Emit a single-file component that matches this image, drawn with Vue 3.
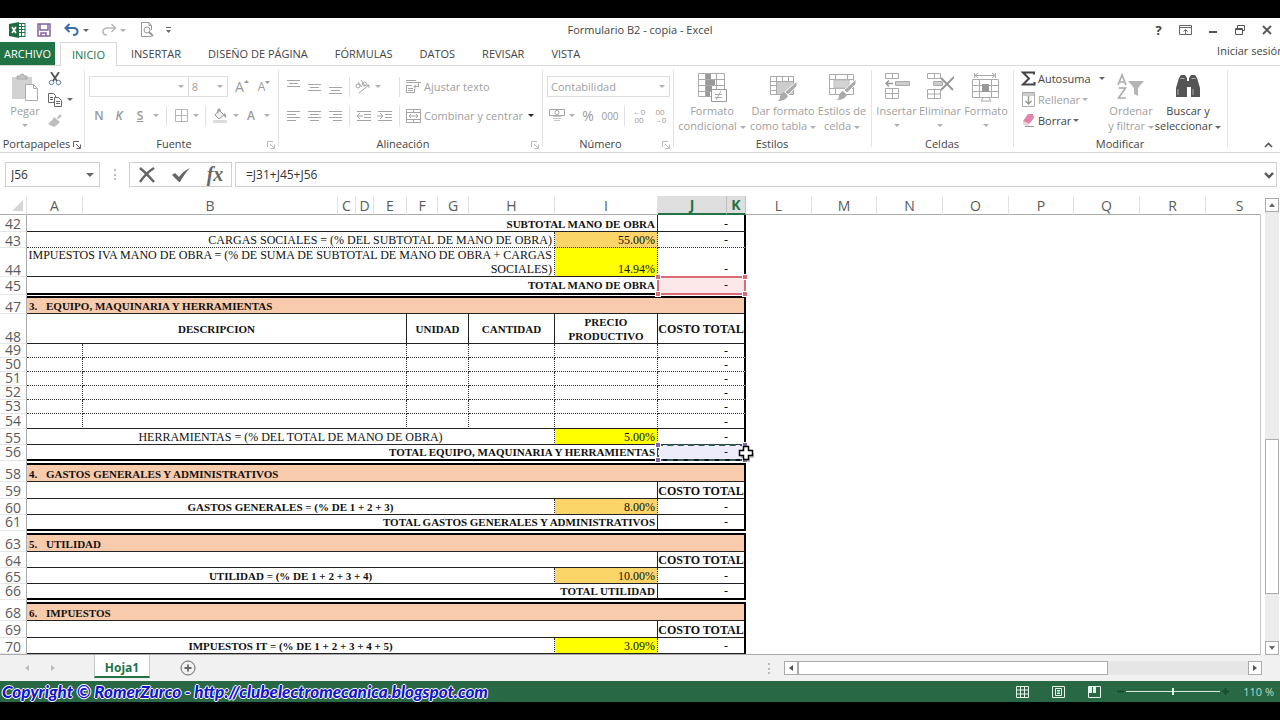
<script setup>
import { h, ref } from 'vue'

const Launcher = () =>
  h('svg', { width: 8, height: 8, viewBox: '0 0 8 8', fill: 'none', stroke: 'currentColor' }, [
    h('path', { d: 'M.5 6V.5H6M3 3l4 4M7.500 3.500V7.500H3.500' })
  ])

const tabs = ['INSERTAR', 'DISEÑO DE PÁGINA', 'FÓRMULAS', 'DATOS', 'REVISAR', 'VISTA']
const nameBox = ref('J56')
const formula = ref('=J31+J45+J56')
const zoom = ref(50)

const columns = [
  ['A', 56], ['B', 255], ['C', 18], ['D', 18], ['E', 33], ['F', 31], ['G', 31], ['H', 86],
  ['I', 103], ['J', 69], ['K', 19], ['L', 66], ['M', 65], ['N', 66], ['O', 66], ['P', 65],
  ['Q', 66], ['R', 66], ['S', 0]
]

const total = (text, cls = '') => [
  { text, span: 9, cls: 'right bold solid-r' },
  { text: text && '-', span: 2, cls: 'amount ' + cls }
]
const rate = (text, value, fill, align = 'right', side = 'dot-r') => [
  { text, span: 8, cls: align + ' dot-r' },
  { text: value, span: 1, cls: 'right low ' + fill + ' ' + side },
  { text: '-', span: 2, cls: 'amount' }
]
const section = (num, text) => [{ num, text, span: 11, cls: 'section bold' }]
const costHead = () => [
  { text: '', span: 9, cls: 'solid-r' },
  { text: 'COSTO TOTAL', span: 2, cls: 'center cost' }
]
const item = () => [
  { text: '', span: 1, cls: 'dot-r' },
  { text: '', span: 4, cls: 'dot-r' },
  { text: '', span: 2, cls: 'dot-r' },
  { text: '', span: 1, cls: 'dot-r' },
  { text: '', span: 1, cls: 'dot-r' },
  { text: '-', span: 2, cls: 'amount' }
]

const rows = [
  { n: 42, size: 'h17', cells: total('SUBTOTAL MANO DE OBRA') },
  { n: 43, size: 'h16', line: 'dotted', cells: rate('CARGAS SOCIALES = (% DEL SUBTOTAL DE MANO DE OBRA)', '55.00%', 'orange') },
  { n: 44, size: 'h29', cells: rate('IMPUESTOS IVA MANO DE OBRA = (% DE SUMA DE SUBTOTAL DE MANO DE OBRA + CARGAS\nSOCIALES)', '14.94%', 'yellow') },
  { n: 45, size: 'h18', line: 'thick', cells: total('TOTAL MANO DE OBRA', 'range-red') },
  { n: '', size: 'h1', line: 'none', cells: [{ text: '', span: 11, cls: 'gap' }] },
  { n: 47, size: 'h18', cells: section('3.', 'EQUIPO, MAQUINARIA Y HERRAMIENTAS') },
  {
    n: 48, size: 'h30', cells: [
      { text: 'DESCRIPCION', span: 5, cls: 'center bold solid-r' },
      { text: 'UNIDAD', span: 2, cls: 'center bold solid-r' },
      { text: 'CANTIDAD', span: 1, cls: 'center bold solid-r' },
      { text: 'PRECIO\nPRODUCTIVO', span: 1, cls: 'center bold solid-r' },
      { text: 'COSTO TOTAL', span: 2, cls: 'center cost' }
    ]
  },
  { n: 49, size: 'h14', line: 'dotted', cells: item() },
  { n: 50, size: 'h14', line: 'dotted', cells: item() },
  { n: 51, size: 'h14', line: 'dotted', cells: item() },
  { n: 52, size: 'h14', line: 'dotted', cells: item() },
  { n: 53, size: 'h14', line: 'dotted', cells: item() },
  { n: 54, size: 'h15', cells: item() },
  { n: 55, size: 'h16', cells: rate('HERRAMIENTAS = (% DEL TOTAL DE MANO DE OBRA)', '5.00%', 'yellow', 'center') },
  { n: 56, size: 'h16', line: 'thick', cells: total('TOTAL EQUIPO, MAQUINARIA Y HERRAMIENTAS', 'range-dash') },
  { n: '', size: 'h2', line: 'none', cells: [{ text: '', span: 11, cls: 'gap' }] },
  { n: 58, size: 'h19', cells: section('4.', 'GASTOS GENERALES Y ADMINISTRATIVOS') },
  { n: 59, size: 'h17', cells: costHead() },
  { n: 60, size: 'h16', cells: rate('GASTOS GENERALES = (% DE 1 + 2 + 3)', '8.00%', 'orange', 'center bold') },
  { n: 61, size: 'h16', line: 'thick', cells: total('TOTAL GASTOS GENERALES Y ADMINISTRATIVOS') },
  { n: '', size: 'h2', line: 'none', cells: [{ text: '', span: 11, cls: 'gap' }] },
  { n: 63, size: 'h19', cells: section('5.', 'UTILIDAD') },
  { n: 64, size: 'h16', cells: costHead() },
  { n: 65, size: 'h16', cells: rate('UTILIDAD = (% DE 1 + 2 + 3 + 4)', '10.00%', 'orange', 'center bold') },
  { n: 66, size: 'h16', line: 'thick', cells: total('TOTAL UTILIDAD') },
  { n: '', size: 'h2', line: 'none', cells: [{ text: '', span: 11, cls: 'gap' }] },
  { n: 68, size: 'h19', cells: section('6.', 'IMPUESTOS') },
  { n: 69, size: 'h17', cells: costHead() },
  { n: 70, size: 'h16', cells: rate('IMPUESTOS IT = (% DE 1 + 2 + 3 + 4 + 5)', '3.09%', 'yellow', 'center bold') },
  { n: 71, size: 'h16', cells: total('') }
]
</script>

<template>
  <div class="screen">
    <div class="excel">
      <header class="titlebar">
        <div class="quick">
          <svg class="logo" width="17" height="16" viewBox="0 0 17 16">
            <rect x="9" y="1.500" width="7" height="13" fill="#fff" stroke="#217346" />
            <path d="M10 4.500h6M10 7.500h6M10 10.500h6M12.500 2v12" stroke="#217346" />
            <path d="M0 2l10-2v16L0 14z" fill="#1e6b41" />
            <path d="M3 5l4 6M7 5l-4 6" stroke="#fff" stroke-width="1.600" />
          </svg>
          <button class="save" aria-label="Guardar">
            <svg width="14" height="14" viewBox="0 0 14 14" fill="none" stroke="#80659f" stroke-width="1.500">
              <path d="M1 1h12v12H1zM3 1v6h8V1M4 13V10h5v3" />
            </svg>
          </button>
          <button class="undo" aria-label="Deshacer">
            <svg width="16" height="14" viewBox="0 0 16 14" fill="none" stroke="#3b6ea8" stroke-width="2">
              <path d="M5.500 1L1.500 5l4 4M2 5h7.500c3 0 4 1.500 4 3.500S12 12 9 12" />
            </svg>
          </button>
          <span class="caret dark"></span>
          <button class="redo" aria-label="Rehacer">
            <svg width="16" height="14" viewBox="0 0 16 14" fill="none" stroke="#b9b9b9" stroke-width="1.600">
              <path d="M10.500 1l4 4-4 4M14 5H6.500C3.500 5 2 6.500 2 8.500S3.500 12 6 12" />
            </svg>
          </button>
          <span class="caret"></span>
          <button class="preview" aria-label="Vista previa">
            <svg width="14" height="16" viewBox="0 0 14 16" fill="none" stroke="#999">
              <path d="M11.500 14.500h-10V.5H9l2.500 3V8M9 .5v3h2.500" /><circle cx="7" cy="8" r="3" /><path d="M9 10l4 4" stroke-width="2" />
            </svg>
          </button>
          <svg class="more" width="7" height="7" viewBox="0 0 7 7"><path d="M1 .5h5" stroke="#666" /><path d="M1 3h5L3.500 6z" fill="#666" /></svg>
        </div>
        <h1>Formulario B2 - copia - Excel</h1>
        <div class="window-buttons">
          <button class="help" aria-label="Ayuda">?</button>
          <button aria-label="Opciones de presentación"><svg width="13" height="10" viewBox="0 0 13 10" fill="none" stroke="#666"><path d="M.5.500h12v9H.5zM.5 2.500h12M6.500 9V4.500M4.500 6.500l2-2 2 2" /></svg></button>
          <button aria-label="Minimizar"><svg width="10" height="10" viewBox="0 0 10 10"><path d="M1 7h8" stroke="#555" stroke-width="2" /></svg></button>
          <button aria-label="Restaurar"><svg width="10" height="10" viewBox="0 0 10 10" fill="none" stroke="#555"><path d="M2.500 3V.5h7v5H7.500M.5 3.500h7v6h-7zM.5 4.500h7" /></svg></button>
          <button aria-label="Cerrar"><svg width="10" height="10" viewBox="0 0 10 10"><path d="M1 1l8 8M9 1L1 9" stroke="#555" stroke-width="1.800" /></svg></button>
        </div>
      </header>

      <nav class="tabs">
        <button class="file">ARCHIVO</button>
        <button class="active">INICIO</button>
        <button v-for="t in tabs" :key="t">{{ t }}</button>
        <a href="#" class="signin">Iniciar sesión</a>
      </nav>

      <section class="ribbon">
        <div class="group g-clip">
          <div class="body">
            <button class="big off">
              <svg width="28" height="29" viewBox="0 0 28 29">
                <path d="M1 4h20v22H1z" fill="#d2d2d2" /><path d="M6 6V3h3q0-2 2-2t2 2h3v3z" fill="#c2c2c2" stroke="#aaa" />
                <path d="M14.500 11.500h8l4 4v12h-12z" fill="#fff" stroke="#aaa" /><path d="M22.500 11.500v4h4" fill="none" stroke="#aaa" />
              </svg>
              <span>Pegar</span><span class="caret"></span>
            </button>
            <div class="stack">
              <button aria-label="Cortar"><svg width="14" height="14" viewBox="0 0 14 14" fill="none"><path d="M3 0l6 9M11 0L5 9" stroke="#555" stroke-width="1.800" /><circle cx="3.500" cy="10.500" r="2.200" stroke="#5b7fa8" /><circle cx="10.500" cy="10.500" r="2.200" stroke="#5b7fa8" /></svg></button>
              <button aria-label="Copiar"><svg width="14" height="14" viewBox="0 0 14 14" fill="#fff" stroke="#666"><path d="M.5.500h5l2 2v7h-7zM2 4.500h3M2 6.500h3" /><path d="M6.500 4.500h4l3 3v6h-7zM8 8.500h4M8 10.500h4" /></svg><span class="caret dark"></span></button>
              <button aria-label="Copiar formato"><svg width="14" height="14" viewBox="0 0 14 14" fill="#bdbdbd"><path d="M9 4l3-4 2 2-4 3zM6 3l6 5-2 2-5-5zM5 5l5 5-4 3-6-3z" /></svg></button>
            </div>
          </div>
          <footer><span>Portapapeles</span><Launcher class="launch dark-ink" /></footer>
        </div>

        <div class="group g-font">
          <div class="body lines">
            <div class="line">
              <span class="pick fontname"><select aria-label="Fuente"><option></option></select><span class="caret"></span></span>
              <span class="pick fontsize"><select aria-label="Tamaño de fuente"><option>8</option></select><span class="caret"></span></span>
              <button class="w22 glyph-a" aria-label="Aumentar fuente">A<svg width="5" height="4" viewBox="0 0 5 4"><path d="M0 3l2.500-3L5 3z" fill="#999" /></svg></button>
              <button class="w22 glyph-a small" aria-label="Disminuir fuente">A<svg width="5" height="4" viewBox="0 0 5 4"><path d="M0 0h5L2.500 3z" fill="#999" /></svg></button>
            </div>
            <div class="line">
              <button class="w20 strong">N</button><button class="w20 strong italic">K</button><button class="w22 strong under">S</button><span class="caret w10"></span>
              <i class="sep w10"></i>
              <button class="w20" aria-label="Bordes"><svg width="13" height="13" viewBox="0 0 13 13" fill="none" stroke="#b5b5b5"><path d="M.5.500h12v12H.5zM6.500 0v13M0 6.500h13" /></svg></button><span class="caret w10"></span>
              <i class="sep w8"></i>
              <button class="w22" aria-label="Color de relleno"><svg width="15" height="15" viewBox="0 0 15 15"><path d="M6 2l5 5-5 4-4-4zM5 5V1h2v3" fill="#eee" stroke="#999" /><path d="M11 5q3 2 2 5l-2-2z" fill="#999" /><path d="M0 12h14v3H0z" fill="#dcdcdc" /></svg></button><span class="caret w10"></span>
              <button class="w20 strong">A</button><span class="caret w12"></span>
            </div>
          </div>
          <footer><span>Fuente</span><Launcher class="launch" /></footer>
        </div>

        <div class="group g-align">
          <div class="body lines">
            <div class="line">
              <button class="w21" aria-label="Alinear arriba"><svg width="13" height="16" viewBox="0 0 13 16" stroke="#a5a5a5"><path d="M0 1.500h13M2 4.500h9M0 7.500h13" /></svg></button>
              <button class="w21" aria-label="Alinear al medio"><svg width="13" height="16" viewBox="0 0 13 16" stroke="#a5a5a5"><path d="M0 5.500h13M2 8.500h9M0 11.500h13" /></svg></button>
              <button class="w21" aria-label="Alinear abajo"><svg width="13" height="16" viewBox="0 0 13 16" stroke="#a5a5a5"><path d="M0 8.500h13M2 11.500h9M0 14.500h13" /></svg></button>
              <i class="sep w7"></i>
              <button class="w20" aria-label="Orientación"><svg width="16" height="14" viewBox="0 0 16 14" fill="none" stroke="#a5a5a5"><circle cx="3" cy="6" r="2" /><path d="M3 2l4 5M6 0l4 6" /><circle cx="9.500" cy="4" r="2" /><path d="M4 13L14 5M14 5v3M14 5h-3" /></svg></button><span class="caret w10"></span>
              <i class="w12"></i><i class="sep w8"></i>
              <button class="label off"><svg width="15" height="15" viewBox="0 0 15 15" fill="none" stroke="#a5a5a5"><path d="M0 1.500h10M0 3.500h15M12.500 4v4M0 6.500h6M8 7.500h4M10 5.500l-2 2 2 2M.5 6.500v7h8v-4M2 9.500h5M2 11.500h5" /></svg>Ajustar texto</button>
            </div>
            <div class="line">
              <button class="w21" aria-label="Izquierda"><svg width="13" height="12" viewBox="0 0 13 12" stroke="#a5a5a5"><path d="M0 1.500h13M0 4.500h9M0 7.500h13M0 10.500h9" /></svg></button>
              <button class="w21" aria-label="Centrar"><svg width="13" height="12" viewBox="0 0 13 12" stroke="#a5a5a5"><path d="M0 1.500h13M2 4.500h9M0 7.500h13M2 10.500h9" /></svg></button>
              <button class="w21" aria-label="Derecha"><svg width="13" height="12" viewBox="0 0 13 12" stroke="#a5a5a5"><path d="M0 1.500h13M4 4.500h9M0 7.500h13M4 10.500h9" /></svg></button>
              <i class="sep w7"></i>
              <button class="w21" aria-label="Disminuir sangría"><svg width="15" height="12" viewBox="0 0 15 12" fill="none" stroke="#a5a5a5"><path d="M1 1.500h14M8 4.500h7M8 7.500h7M1 10.500h14M7 6H1M4 3L1 6l3 3" /></svg></button>
              <button class="w21" aria-label="Aumentar sangría"><svg width="15" height="12" viewBox="0 0 15 12" fill="none" stroke="#a5a5a5"><path d="M1 1.500h14M8 4.500h7M8 7.500h7M1 10.500h14M0 6h6M3 3l3 3-3 3" /></svg></button>
              <i class="sep w8"></i>
              <button class="label off"><svg width="15" height="14" viewBox="0 0 15 14" fill="none" stroke="#a5a5a5"><path d="M.5.500h14v13H.5zM0 3.500h15M0 10.500h15M7.500 0v3.500M7.500 10.500V14M3 7h9M5 5L3 7l2 2M10 5l2 2-2 2" /></svg>Combinar y centrar</button>
              <span class="caret ink w16"></span>
            </div>
          </div>
          <footer><span>Alineación</span><Launcher class="launch" /></footer>
        </div>

        <div class="group g-num">
          <div class="body lines">
            <div class="line"><span class="pick format"><select aria-label="Formato de número"><option>Contabilidad</option></select><span class="caret"></span></span></div>
            <div class="line">
              <button class="w20" aria-label="Formato de contabilidad"><svg width="16" height="15" viewBox="0 0 16 15" fill="none" stroke="#a5a5a5"><path d="M.5 1.500h15v6H.5z" /><circle cx="8" cy="4.500" r="2" /><path d="M4 10.500h8M5 12.500h6M4 8.500h8" stroke="#c8c8c8" /></svg></button><span class="caret w10"></span>
              <button class="w22 pct">%</button><button class="w22 thousands">000</button>
              <i class="sep w7"></i>
              <button class="w22 dec" aria-label="Aumentar decimales"><span>←0</span><span>00</span></button>
              <button class="w20 dec" aria-label="Disminuir decimales"><span>00</span><span>→0</span></button>
            </div>
          </div>
          <footer><span>Número</span><Launcher class="launch" /></footer>
        </div>

        <div class="group g-style">
          <div class="body">
            <button class="big off w72">
              <svg width="29" height="29" viewBox="0 0 29 29" fill="none" stroke="#aaa"><path d="M.5.500h26v23H.5zM0 6.500h27M0 12.500h27M0 18.500h27M7.500 0v24M18.500 0v24" /><path d="M8 1h5v5H8zM8 7h9v5H8zM8 13h6v5H8zM8 19h4v4H8z" fill="#999" stroke="none" /><path d="M13.500 16.500h15v12h-15z" fill="#fff" stroke="#999" /><path d="M17 21.500h7M17 24.500h7M23 18l-5 9" /></svg>
              <span>Formato</span><span>condicional <i class="caret"></i></span>
            </button>
            <button class="big off w70">
              <svg width="29" height="29" viewBox="0 0 29 29" fill="none" stroke="#aaa"><path d="M1.500 3.500h23v18h-23zM1 8.500h24M1 12.500h24M1 17.500h24M7.500 3v19M13.500 3v19M19.500 3v19" /><path d="M8 9h16v12H8z" fill="#ccc" stroke="none" /><path d="M28 8v5l-9 9-3-3z" fill="#aaa" stroke="#fff" /><path d="M15 19l4 4q-2 5-11 5 3-1 3-4t4-5z" fill="#aaa" stroke="none" /></svg>
              <span>Dar formato</span><span>como tabla <i class="caret"></i></span>
            </button>
            <button class="big off w48">
              <svg width="29" height="29" viewBox="0 0 29 29" fill="none" stroke="#aaa"><path d="M1.500 1.500h24v20h-24zM1 6.500h25M1 15.500h25M7.500 1v21M19.500 1v6" /><path d="M6 7h15v8H6z" fill="#d2d2d2" stroke="#bbb" /><path d="M28 6v5l-9 9-3-3z" fill="#aaa" stroke="#fff" /><path d="M15 18l4 4q-2 5-11 5 3-1 3-4t4-5z" fill="#aaa" stroke="none" /></svg>
              <span>Estilos de</span><span>celda <i class="caret"></i></span>
            </button>
          </div>
          <footer><span>Estilos</span></footer>
        </div>

        <div class="group g-cell">
          <div class="body">
            <button class="big off w43">
              <svg width="26" height="29" viewBox="0 0 26 29" fill="none" stroke="#aaa"><path d="M1.500.500h13v5h-13zM8.500 0v6M1.500 15.500h13v10h-13zM8.500 15v11M1 20.500h14" /><path d="M11.500 8.500h14v4h-14z" fill="#ccc" /><path d="M9 10.500H2M5 7.500l-3 3 3 3" stroke="#999" stroke-width="1.500" /></svg>
              <span>Insertar</span><span class="caret"></span>
            </button>
            <button class="big off w44">
              <svg width="28" height="29" viewBox="0 0 28 29" fill="none" stroke="#aaa"><path d="M1.500.500h13v5h-13zM8.500 0v6M1.500 16.500h13v9h-13zM8.500 16v10M1 21h14" /><path d="M7.500 8.500h9v4h-9z" fill="#ccc" /><path d="M15 5l12 12M28 4L15 17" stroke="#999" stroke-width="2" /></svg>
              <span>Eliminar</span><span class="caret"></span>
            </button>
            <button class="big off w48">
              <svg width="28" height="29" viewBox="0 0 28 29" fill="none" stroke="#aaa"><path d="M3 2.500h20M6 0L3 2.500 6 5M20 0l3 2.500L20 5M2.500 0v5M23.500 0v5" /><path d="M.5 6.500h26v18H.5zM0 12.500h27M0 18.500h27M7.500 6v19M19.500 6v19M9 28l2-3M19 28l-2-3M9 28h10" /><path d="M10 11h7v8h-7z" fill="#999" stroke="none" /></svg>
              <span>Formato</span><span class="caret"></span>
            </button>
          </div>
          <footer><span>Celdas</span></footer>
        </div>

        <div class="group g-edit">
          <div class="body">
            <div class="stack wide">
              <button><svg width="15" height="15" viewBox="0 0 15 15" fill="none"><path d="M13 3.500V1.500H2l6 6-6 6h11.500v-2.500" stroke="#444" stroke-width="2" /></svg>Autosuma<i class="caret dark far"></i></button>
              <button class="off"><svg width="15" height="15" viewBox="0 0 15 15" fill="none" stroke="#aaa"><path d="M1.500.500h12v14h-12z" /><path d="M2 1h11v3H2z" fill="#ccc" stroke="none" /><path d="M7.500 4v8M4.500 9l3 3 3-3" stroke="#999" stroke-width="1.500" /></svg>Rellenar<i class="caret"></i></button>
              <button><svg width="15" height="15" viewBox="0 0 15 15"><path d="M7 1h5l1 4-5 6-6-3z" fill="#df86a8" /><path d="M2 8l6 3-1 2.500-5-2z" fill="#f6cfdd" /><path d="M4 13.500h9" stroke="#999" /></svg>Borrar<i class="caret dark"></i></button>
            </div>
            <button class="big off w44">
              <svg width="28" height="29" viewBox="0 0 28 29" fill="none" stroke="#aaa" stroke-width="1.600"><path d="M1 12L5 2l4 10M2.500 9h5M1.500 15H8.500l-7 10H9" /><path d="M11 8h16l-6 7v8l-4-2v-6z" fill="#b5b5b5" stroke="none" /></svg>
              <span>Ordenar</span><span>y filtrar <i class="caret"></i></span>
            </button>
            <button class="big w70">
              <svg width="26" height="29" viewBox="0 0 26 29" fill="#555"><path d="M4 5l2-3h4l2 3v3h2V5l2-3h4l2 3 3 10v9h-9V14h-4v10H1v-9z" /><path d="M3 16v6M5.500 5.500h4M16.500 5.500h4M18 16v6" stroke="#aaa" /></svg>
              <span>Buscar y</span><span>seleccionar <i class="caret dark"></i></span>
            </button>
          </div>
          <footer><span>Modificar</span></footer>
        </div>
        <button class="collapse" aria-label="Contraer la cinta"><svg width="9" height="6" viewBox="0 0 9 6"><path d="M1 5l3.500-3.500L8 5" fill="none" stroke="#555" stroke-width="1.600" /></svg></button>
      </section>

      <section class="formula-bar">
        <div class="namebox"><input v-model="nameBox" aria-label="Cuadro de nombres"><button aria-label="Lista de nombres"><span class="caret dark large"></span></button></div>
        <span class="dots"></span>
        <div class="entry">
          <button aria-label="Cancelar"><svg width="18" height="16" viewBox="0 0 18 16"><path d="M2 1q6 5 14 14M16 1Q8 6 2 15" fill="none" stroke="#666" stroke-width="2.400" /></svg></button>
          <button aria-label="Introducir"><svg width="20" height="16" viewBox="0 0 20 16"><path d="M1 8l3-2 4 4Q12 4 19 1q-5 5-10 14H8z" fill="#666" /></svg></button>
          <button class="fx" aria-label="Insertar función">fx</button>
        </div>
        <div class="formula"><input v-model="formula" aria-label="Barra de fórmulas"><svg width="10" height="8" viewBox="0 0 10 8"><path d="M1 2l4 4 4-4" fill="none" stroke="#555" stroke-width="2.400" /></svg></div>
      </section>

      <main class="workspace">
        <div class="sheet">
          <table>
            <colgroup>
              <col class="col-n">
              <col v-for="c in columns" :key="c[0]" :style="c[1] ? { width: c[1] + 'px' } : null">
            </colgroup>
            <thead>
              <tr>
                <th class="corner"><svg width="13" height="13" viewBox="0 0 13 13"><path d="M12 1v11H1z" fill="#d6d6d6" /></svg></th>
                <th v-for="c in columns" :key="c[0]" scope="col" :class="{ on: c[0] === 'J' || c[0] === 'K' }">{{ c[0] }}</th>
              </tr>
            </thead>
            <tbody>
              <tr v-for="(r, i) in rows" :key="i" :class="[r.size, r.line || 'line1']">
                <th scope="row">{{ r.n }}</th>
                <td v-for="(c, j) in r.cells" :key="j" :colspan="c.span" :class="[c.cls, { edge: j === r.cells.length - 1 && c.cls !== 'gap' }]">
                  <span v-if="c.num" class="num">{{ c.num }}</span>{{ c.text }}
                  <span v-if="c.cls.includes('range-red')" class="range red"><b></b><b></b><b></b><b></b></span>
                  <span v-if="c.cls.includes('range-dash')" class="range dash"><b></b><b></b><b></b><b></b></span>
                  <svg v-if="c.cls.includes('range-dash')" class="pointer" width="18" height="18" viewBox="0 0 18 18">
                    <path d="M7 4h5v4h4v5h-4v4H7v-4H3V8h4z" fill="#999" opacity=".6" />
                    <path d="M5.500 1.500h5v4h4v5h-4v4h-5v-4h-4v-5h4z" fill="#fff" stroke="#000" stroke-width="1.500" />
                  </svg>
                </td>
                <td colspan="8"></td>
              </tr>
            </tbody>
          </table>
        </div>
        <div class="vscroll">
          <button aria-label="Arriba"><svg width="6" height="4" viewBox="0 0 6 4"><path d="M0 4l3-4 3 4z" fill="#666" /></svg></button>
          <div class="track"><span></span></div>
          <button aria-label="Abajo"><svg width="6" height="4" viewBox="0 0 6 4"><path d="M0 0h6L3 4z" fill="#666" /></svg></button>
        </div>
      </main>

      <div class="sheetbar">
        <button class="nav" aria-label="Hoja anterior"><svg width="4" height="6" viewBox="0 0 4 6"><path d="M4 0v6L0 3z" fill="#bbb" /></svg></button>
        <button class="nav" aria-label="Hoja siguiente"><svg width="4" height="6" viewBox="0 0 4 6"><path d="M0 0v6l4-3z" fill="#bbb" /></svg></button>
        <button class="sheet-tab">Hoja1</button>
        <button class="add" aria-label="Hoja nueva"><svg width="16" height="16" viewBox="0 0 16 16" fill="none" stroke="#666"><circle cx="8" cy="8" r="7" /><path d="M8 4.500v7M4.500 8h7" stroke-width="1.800" /></svg></button>
        <span class="dots"></span>
        <div class="hscroll">
          <button aria-label="Izquierda"><svg width="4" height="6" viewBox="0 0 4 6"><path d="M4 0v6L0 3z" fill="#555" /></svg></button>
          <div class="track"><span></span></div>
          <button aria-label="Derecha"><svg width="4" height="6" viewBox="0 0 4 6"><path d="M0 0v6l4-3z" fill="#555" /></svg></button>
        </div>
      </div>

      <footer class="status">
        <span class="credit">Copyright © RomerZurco - http://clubelectromecanica.blogspot.com</span>
        <div class="views">
          <button aria-label="Normal"><svg width="13" height="12" viewBox="0 0 13 12" fill="none" stroke="#e6f2ea"><path d="M.5.500h12v11H.5zM0 4h13M0 8h13M4.500 0v12M8.500 0v12" /></svg></button>
          <button aria-label="Diseño de página"><svg width="13" height="12" viewBox="0 0 13 12" fill="none" stroke="#e6f2ea"><path d="M.5.500h12v11H.5zM3.500 2.500h6v7h-6zM5 4.500h3M5 6h3M5 7.500h3" /></svg></button>
          <button aria-label="Vista previa de salto de página"><svg width="13" height="12" viewBox="0 0 13 12" fill="none" stroke="#e6f2ea"><path d="M.5.500h12v11H.5z" /><path d="M1 1h3v6H1zM5 1h3v6H5z" fill="#e6f2ea" stroke="none" /></svg></button>
        </div>
        <div class="zoom">
          <button aria-label="Alejar"><svg width="7" height="7" viewBox="0 0 7 7"><path d="M0 3.500h7" stroke="#174d2e" stroke-width="2" /></svg></button>
          <input v-model="zoom" type="range" min="0" max="100" aria-label="Zoom">
          <button aria-label="Acercar"><svg width="7" height="7" viewBox="0 0 7 7"><path d="M0 3.500h7M3.500 0v7" stroke="#174d2e" stroke-width="2" /></svg></button>
          <span>110 %</span>
        </div>
      </footer>
    </div>
  </div>
</template>

<style>
body { margin: 0; background: #000; overflow: hidden; }
</style>

<style scoped>
* { box-sizing: border-box; }
.screen { height: 100vh; padding: 18px 0; background: #000; }
.excel { height: 100%; display: flex; flex-direction: column; background: #fff; overflow: hidden; color: #444; font-family: "Open Sans", "Noto Sans", sans-serif; font-size: 11px; }
button { margin: 0; padding: 0; border: 0; background: none; font: inherit; color: inherit; display: flex; align-items: center; justify-content: center; flex: none; white-space: nowrap; }
svg { flex: none; display: block; }
i { font-style: normal; flex: none; }
.w7 { width: 7px; } .w8 { width: 8px; } .w10 { width: 10px; } .w12 { width: 12px; } .w16 { width: 16px; }
.w20 { width: 20px; } .w21 { width: 21px; } .w22 { width: 22px; } .w43 { width: 43px; } .w44 { width: 44px; }
.w48 { width: 48px; } .w70 { width: 70px; } .w72 { width: 72px; }

.caret { display: inline-flex; align-items: center; justify-content: center; flex: none; color: #b0b0b0; vertical-align: middle; }
.caret::before { content: ""; border: 3px solid transparent; border-top-color: currentColor; border-bottom: 0; }
.caret.dark { color: #666; }
.caret.ink { color: #222; }
.caret.large::before { border-width: 4px; border-bottom: 0; }

.titlebar { display: grid; grid-template-columns: 1fr auto 1fr; align-items: center; height: 24px; flex: none; }
.titlebar h1 { margin: 0; font-size: 11px; font-weight: 400; line-height: 16px; }
.quick { display: flex; align-items: center; padding-left: 9px; }
.save { margin-left: 11px; }
.undo { margin: 0 3px 0 13px; }
.redo { margin: 0 3px 0 12px; }
.preview { margin-left: 14px; }
.more { margin-left: 11px; }
.window-buttons { display: flex; justify-content: flex-end; }
.window-buttons button { width: 27px; height: 20px; }
.window-buttons .help { font-weight: 700; font-size: 13px; }

.tabs { display: flex; height: 24px; flex: none; border-bottom: 1px solid #d8d8d8; font-size: 11px; }
.tabs button { padding: 0 13px 0 14px; }
.tabs .file { width: 55px; padding: 0; background: #217346; color: #fff; }
.tabs .active { width: 57px; padding: 0; margin-left: 5px; border: 1px solid #d8d8d8; border-bottom: 0; height: 24px; background: #fff; color: #217346; }
.signin { margin: 0 -4px 0 auto; color: #444; text-decoration: none; line-height: 18px; white-space: nowrap; }

.ribbon { display: flex; height: 87px; flex: none; border-bottom: 1px solid #d8d8d8; }
.group { display: flex; flex-direction: column; position: relative; padding: 0 4px; flex: none; }
.group::after { content: ""; position: absolute; right: 0; top: 4px; bottom: 5px; width: 1px; background: #e4e4e4; }
.g-clip { width: 85px; } .g-font { width: 194px; } .g-align { width: 264px; } .g-num { width: 131px; }
.g-style { width: 198px; padding: 0 2px; } .g-cell { width: 142px; padding: 0 3px; } .g-edit { width: 214px; }
.body { flex: 1; display: flex; }
.lines { flex-direction: column; padding-top: 6px; }
.line { display: flex; align-items: center; height: 29px; }
.group footer { height: 16px; display: flex; align-items: center; justify-content: center; line-height: 16px; padding-right: 16px; position: relative; }
.g-clip footer { padding-right: 12px; }
.g-style footer, .g-cell footer, .g-edit footer { padding-right: 2px; }
.launch { position: absolute; right: 0; top: 5px; color: #bbb; }
.dark-ink { color: #666; }
.off { color: #a0a0a0; }
.big { flex-direction: column; justify-content: flex-start; padding-top: 7px; line-height: 15px; height: 70px; }
.big svg { margin-bottom: 1px; }
.big > span { height: 15px; }
.g-clip .big { width: 42px; }
.stack { display: flex; flex-direction: column; padding-top: 2px; }
.stack button { height: 21px; justify-content: flex-start; gap: 8px; }
.g-clip .stack { padding-left: 2px; }
.g-clip .stack button { gap: 5px; }
.stack.wide { width: 91px; padding-left: 3px; }
.stack.wide button { gap: 2px; }
.far { margin-left: 6px; }
.pick { position: relative; display: flex; height: 21px; border: 1px solid #dedede; }
.pick select { appearance: none; width: 100%; border: 0; border-radius: 0; padding: 0 3px; background: none; color: #a0a0a0; font: inherit; }
.pick .caret { position: absolute; right: 4px; top: 0; bottom: 0; pointer-events: none; }
.fontname { width: 104px; } .fontsize { width: 41px; border-left: 0; margin-right: 3px; } .format { width: 123px; }
.glyph-a { color: #999; font-size: 14px; align-items: center; }
.glyph-a svg { align-self: flex-start; margin-top: 3px; }
.small { font-size: 12px; }
.strong { font-weight: 600; font-size: 12px; color: #999; }
.italic { font-style: italic; }
.under { text-decoration: underline; }
.sep { display: flex; justify-content: center; height: 20px; }
.sep::before { content: ""; width: 1px; background: #e0e0e0; }
.label { gap: 3px; padding-left: 3px; }
.pct { color: #999; font-size: 14px; }
.thousands { color: #999; font-size: 10px; }
.dec { flex-direction: column; font-size: 8px; line-height: 8px; color: #999; align-items: center; }
.collapse { margin: auto 7px 4px auto; }

.formula-bar { display: flex; height: 43px; flex: none; padding: 9px 3px 9px 5px; align-items: center; font-size: 12px; }
.formula-bar input { border: 0; background: none; font: inherit; color: #333; flex: 1; min-width: 0; padding: 0; outline: 0; }
.namebox { display: flex; width: 95px; height: 25px; border: 1px solid #d0d0d0; padding: 0 5px; }
.dots { width: 29px; height: 11px; display: flex; justify-content: center; }
.dots::before { content: ""; border-left: 2px dotted #bbb; }
.entry { display: flex; width: 103px; height: 25px; border: 1px solid #d0d0d0; margin-right: 3px; }
.entry button { width: 34px; }
.entry .fx { font-family: "Liberation Serif", serif; font-style: italic; font-weight: 700; font-size: 20px; color: #666; }
.formula { display: flex; flex: 1; align-items: center; height: 25px; border: 1px solid #d0d0d0; padding: 0 2px 0 10px; }

.workspace { display: flex; flex: 1; min-height: 0; }
.sheet { flex: 1; min-width: 0; overflow: hidden; position: relative; border-bottom: 1px solid #ababab; }
.sheet::after { content: ""; position: absolute; right: 0; top: 18px; bottom: 0; width: 1px; background: #c6c6c6; }
table { width: 100%; table-layout: fixed; border-collapse: separate; border-spacing: 0; }
.col-n { width: 27px; }
th, td { padding: 0; }
thead th { height: 19px; padding-top: 1px; border-bottom: 1px solid #ababab; border-right: 1px solid #e2e2e2; font-size: 14px; line-height: 16px; font-weight: 400; color: #5a5a5a; }
thead th:last-child { padding-left: 12px; border-right: 0; }
thead .on { background: #dedede; color: #217346; font-weight: 700; border-right-color: #c0c0c0; border-bottom: 2px solid #217346; }
.corner svg { margin: 0 2px 0 auto; }
tbody th { font-size: 14px; line-height: 13px; font-weight: 400; color: #5a5a5a; vertical-align: bottom; border-right: 1px solid #ababab; border-bottom: 1px solid #e6e6e6; }
tbody td { font-family: "Liberation Serif", serif; font-size: 12px; line-height: 12px; color: #111; white-space: pre-line; vertical-align: middle; }
.h1 > * { height: 1px; } .h2 > * { height: 2px; } .h14 > * { height: 14px; } .h15 > * { height: 15px; } .h16 > * { height: 16px; }
.h17 > * { height: 17px; } .h18 > * { height: 18px; } .h19 > * { height: 19px; } .h29 > * { height: 29px; } .h30 > * { height: 30px; }
.h1 > *, .h2 > * { line-height: 0; font-size: 0; border-bottom: 0; }
.h29 td { line-height: 14px; vertical-align: bottom; }
.h30 td { line-height: 14px; }
.h17 th, .h19 th { padding-bottom: 1px; }
.h14 th, .h15 th { line-height: 12px; padding-bottom: 1px; }
.thick th { padding-bottom: 2px; }
tr td:last-child { border: 0; }
.line1:not(.h29):not(.h30) td, .dotted td { padding-top: 1px; }
.line1 td:not(:last-child) { border-bottom: 1px solid #222; }
.dotted td:not(:last-child) { border-bottom: 1px dotted #333; }
.thick td:not(:last-child) { border-bottom: 2px solid #000; }
.solid-r { border-right: 1px solid #222; }
.dot-r { border-right: 1px dotted #333; }
.edge { border-right: 2px solid #000; }
.right { text-align: right; padding-right: 2px; }
.center { text-align: center; }
tbody .bold { font-weight: 700; font-size: 11px; }
.cost { font-weight: 700; }
.amount { text-align: right; padding-right: 16px; position: relative; }
.orange { background: #fbd568; }
.yellow { background: #ff0; }
.section { background: #f8cbad; border-top: 2px solid #000; padding-left: 2px; }
.num { display: inline-block; width: 17px; }
.range { position: absolute; z-index: 1; inset: -1px -2px -2px -1px; border: 2px solid #dc6b78; background: #e6505022; }
.range b { position: absolute; width: 6px; height: 6px; background: #dc6b78; border: 1px solid #fff; }
.range b:nth-child(1) { left: -4px; top: -4px; }
.range b:nth-child(2) { right: -4px; top: -4px; }
.range b:nth-child(3) { left: -4px; bottom: -4px; }
.range b:nth-child(4) { right: -4px; bottom: -4px; }
.range.dash { border: 2px dashed #2f5a50; background: #7070d822; }
.range.dash b { background: #8064b4; }
.pointer { position: absolute; right: -12px; top: 0; z-index: 2; }

.vscroll { width: 19px; flex: none; display: flex; flex-direction: column; padding: 2px 1px 0 4px; }
.vscroll button, .hscroll button { width: 14px; height: 14px; border: 1px solid #ababab; background: #fff; }
.vscroll .track { flex: 1; background: #ececec; display: grid; grid-template-rows: 53fr 36fr 11fr; }
.vscroll .track span { grid-row: 2; background: #fff; border: 1px solid #ababab; }

.sheetbar { display: flex; height: 26px; flex: none; background: #f1f1f1; align-items: center; padding: 0 18px 0 14px; }
.nav { width: 26px; }
.sheet-tab { width: 56px; height: 23px; padding-top: 3px; align-self: flex-start; margin: 0 30px 0 28px; background: #fff; border: 1px solid #c8c8c8; border-top: 0; border-bottom: 2px solid #217346; color: #217346; font-size: 12px; font-weight: 700; }
.sheetbar .dots { margin-left: auto; }
.hscroll { display: flex; width: calc(38% + 4px); height: 14px; }
.hscroll .track { flex: 1; display: flex; background: #e6e6e6; }
.hscroll .track span { width: 69%; background: #fff; border: 1px solid #ababab; }

.status { display: flex; height: 21px; flex: none; align-items: center; background: #286844; color: #bcd8c6; }
.credit { flex: 1; font-family: "Lato", sans-serif; font-size: 17px; font-weight: 900; font-style: italic; line-height: 20px; padding-left: 2px; white-space: nowrap; color: #1616c8; text-shadow: 1px 0 #fff, -1px 0 #fff, 0 1px #fff, 0 -1px #fff; }
.views { display: flex; gap: 23px; margin-right: 16px; }
.zoom { display: flex; align-items: center; gap: 2px; padding-right: 6px; }
.zoom span { margin-left: 12px; font-size: 11px; }
.zoom input { appearance: none; width: 94px; height: 9px; margin: 0; background: linear-gradient(#d8eadf, #d8eadf) center / 100% 1px no-repeat; }
.zoom input::-webkit-slider-thumb { appearance: none; width: 2px; height: 7px; background: #e6f2ea; }
</style>
